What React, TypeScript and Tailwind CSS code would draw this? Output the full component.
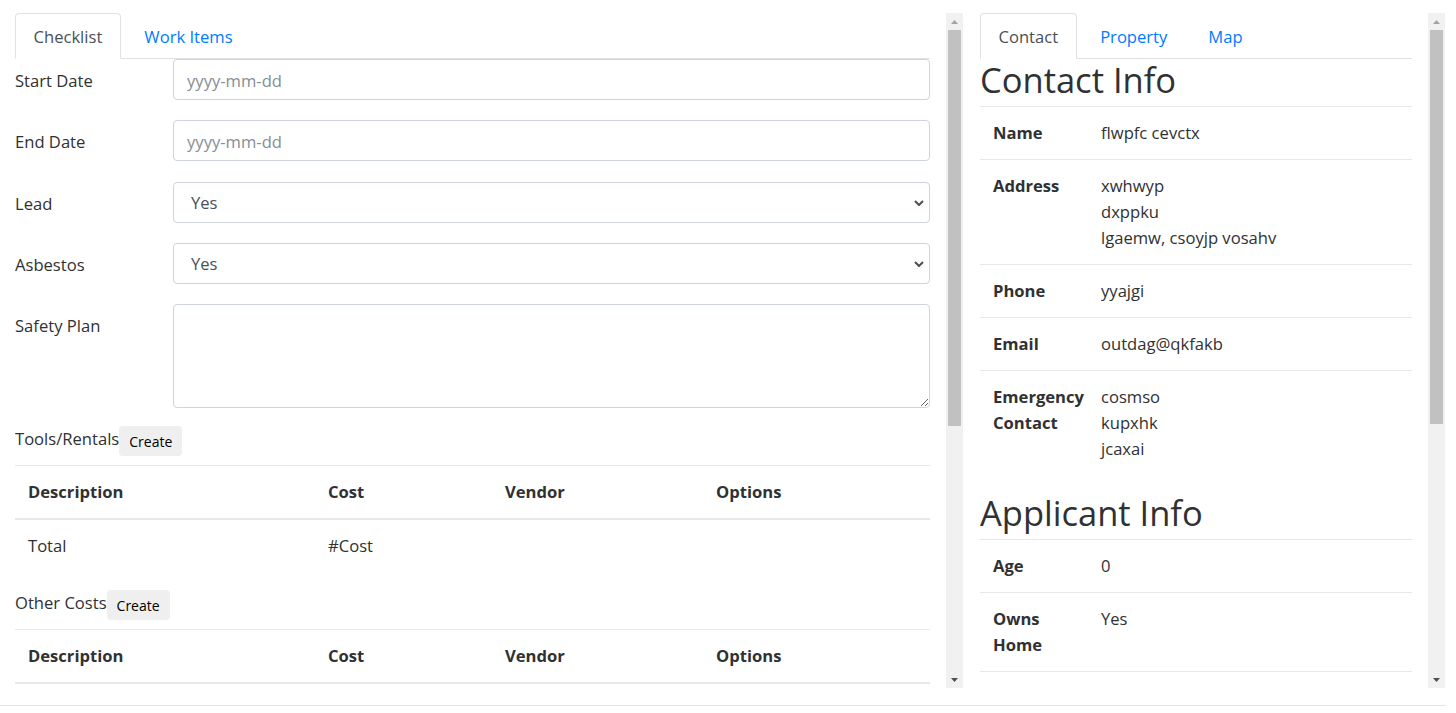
import React from 'react';

const font = "font-['Open_Sans','Noto_Sans',sans-serif]";

const Scrollbar = ({ thumb }: { thumb: string }) => (
  <div className="w-[17px] h-full bg-[#f1f1f1] flex flex-col shrink-0">
    <div className="h-[17px] flex items-center justify-center">
      <svg width="7" height="4" viewBox="0 0 7 4">
        <path d="M3.5 0 L7 4 L0 4 Z" fill="#a3a3a3" />
      </svg>
    </div>
    <div className="flex-1 px-[2px]">
      <div className={`bg-[#c1c1c1] ${thumb}`} />
    </div>
    <div className="h-[17px] flex items-center justify-center">
      <svg width="7" height="4" viewBox="0 0 7 4">
        <path d="M0 0 L7 0 L3.5 4 Z" fill="#505050" />
      </svg>
    </div>
  </div>
);

const Tabs = ({ items }: { items: string[] }) => (
  <div className="flex border-b border-[#dee2e6]">
    {items.map((item, i) =>
      i === 0 ? (
        <div
          key={item}
          className="-mb-px h-[46px] px-[17.5px] pt-[10px] leading-[26px] border border-[#dee2e6] border-b-white rounded-t-[4px] text-[#495057] bg-white"
        >
          {item}
        </div>
      ) : (
        <div key={item} className="ml-[6px] px-[17.5px] pt-[11px] leading-[26px] text-[#007bff]">
          {item}
        </div>
      )
    )}
  </div>
);

const Chevron = () => (
  <svg
    width="10"
    height="6"
    viewBox="0 0 10 6"
    className="absolute right-[6px] top-1/2 -translate-y-1/2 pointer-events-none"
  >
    <path d="M1 1 L5 5 L9 1" fill="none" stroke="#4d4d4d" strokeWidth="2" />
  </svg>
);

const FieldLabel = ({ children }: { children: React.ReactNode }) => (
  <div className="w-[158px] shrink-0 pt-[9px] leading-[26px]">{children}</div>
);

const CostTable = ({ rows }: { rows: string[][] }) => (
  <div>
    <div className="grid grid-cols-[300px_177px_211px_227px] border-t border-b-2 border-[#e6e8ea] font-bold">
      {['Description', 'Cost', 'Vendor', 'Options'].map((h) => (
        <div key={h} className="px-[13px] py-[13px] leading-[26px]">
          {h}
        </div>
      ))}
    </div>
    {rows.map((row, i) => (
      <div key={i} className="grid grid-cols-[300px_177px_211px_227px]">
        {row.map((c, j) => (
          <div key={j} className="px-[13px] py-[13px] leading-[26px] h-[52px]">
            {c}
          </div>
        ))}
      </div>
    ))}
  </div>
);

const InfoRow = ({ label, lines }: { label: string; lines: string[] }) => (
  <div className="flex border-t border-[#e6e8ea] py-[13px] leading-[26px]">
    <div className="w-[121px] shrink-0 pl-[13px] pr-[12px] font-bold">{label}</div>
    <div>
      {lines.map((l) => (
        <div key={l}>{l}</div>
      ))}
    </div>
  </div>
);

export default function App() {
  return (
    <div className={`w-[1456px] h-[713px] bg-white text-[#2f3133] text-[16.6px] ${font}`}>
      <div className="flex h-[688px] pt-[13px] pl-[15px]">
        {/* left panel */}
        <div className="flex h-full">
          <div className="w-[915px] h-full overflow-hidden">
            <Tabs items={['Checklist', 'Work Items']} />
            <div className="flex h-[41px] mb-[20px]">
              <FieldLabel>Start Date</FieldLabel>
              <input
                type="text"
                placeholder="yyyy-mm-dd"
                className="flex-1 h-[41px] border border-[#ced4da] rounded-[4px] pl-[13px] pt-[1px] outline-none placeholder:text-[#868e96]"
              />
            </div>
            <div className="flex h-[41px] mb-[21px]">
              <FieldLabel>End Date</FieldLabel>
              <input
                type="text"
                placeholder="yyyy-mm-dd"
                className="flex-1 h-[41px] border border-[#ced4da] rounded-[4px] pl-[13px] pt-[1px] outline-none placeholder:text-[#868e96]"
              />
            </div>
            <div className="flex h-[41px] mb-[20px]">
              <FieldLabel>Lead</FieldLabel>
              <div className="relative flex-1">
                <select className="appearance-none w-full h-[41px] border border-[#ced4da] rounded-[4px] pl-[17px] pt-[2px] bg-white text-[#495057] outline-none">
                  <option>Yes</option>
                  <option>No</option>
                </select>
                <Chevron />
              </div>
            </div>
            <div className="flex h-[41px] mb-[20px]">
              <FieldLabel>Asbestos</FieldLabel>
              <div className="relative flex-1">
                <select className="appearance-none w-full h-[41px] border border-[#ced4da] rounded-[4px] pl-[17px] pt-[2px] bg-white text-[#495057] outline-none">
                  <option>Yes</option>
                  <option>No</option>
                </select>
                <Chevron />
              </div>
            </div>
            <div className="flex h-[104px]">
              <FieldLabel>Safety Plan</FieldLabel>
              <textarea className="flex-1 h-[104px] border border-[#ced4da] rounded-[4px] outline-none resize-y" />
            </div>

            <div className="flex items-start h-[39px] mt-[18px]">
              <span className="leading-[26px]">Tools/Rentals</span>
              <button className="h-[30px] px-[10px] pt-[1px] rounded-[4px] bg-[#efefef] text-[14px] text-black">Create</button>
            </div>
            <CostTable rows={[['Total', '#Cost', '', '']]} />

            <div className="flex items-start h-[39px] mt-[18px]">
              <span className="leading-[26px]">Other Costs</span>
              <button className="h-[30px] px-[10px] pt-[1px] rounded-[4px] bg-[#efefef] text-[14px] text-black">Create</button>
            </div>
            <CostTable rows={[]} />
          </div>
          <div className="w-[16px] shrink-0" />
          <Scrollbar thumb="h-[396px]" />
        </div>

        {/* right panel */}
        <div className="flex h-full ml-[17px]">
          <div className="w-[432px] h-full overflow-hidden">
            <Tabs items={['Contact', 'Property', 'Map']} />
            <div className="h-[47px] leading-[42px] text-[34.5px] font-medium">Contact Info</div>
            <InfoRow label="Name" lines={['flwpfc cevctx']} />
            <InfoRow label="Address" lines={['xwhwyp', 'dxppku', 'lgaemw, csoyjp vosahv']} />
            <InfoRow label="Phone" lines={['yyajgi']} />
            <InfoRow label="Email" lines={['outdag@qkfakb']} />
            <InfoRow label="Emergency Contact" lines={['cosmso', 'kupxhk', 'jcaxai']} />
            <div className="h-[47px] mt-[17px] leading-[42px] text-[34.5px] font-medium">Applicant Info</div>
            <InfoRow label="Age" lines={['0']} />
            <InfoRow label="Owns Home" lines={['Yes']} />
            <div className="border-t border-[#e6e8ea] h-[52px]" />
          </div>
          <div className="w-[16px] shrink-0" />
          <Scrollbar thumb="h-[394px]" />
        </div>
      </div>
      <div className="mt-[17px] h-px w-[1446px] bg-[#e5e5e5]" />
    </div>
  );
}
